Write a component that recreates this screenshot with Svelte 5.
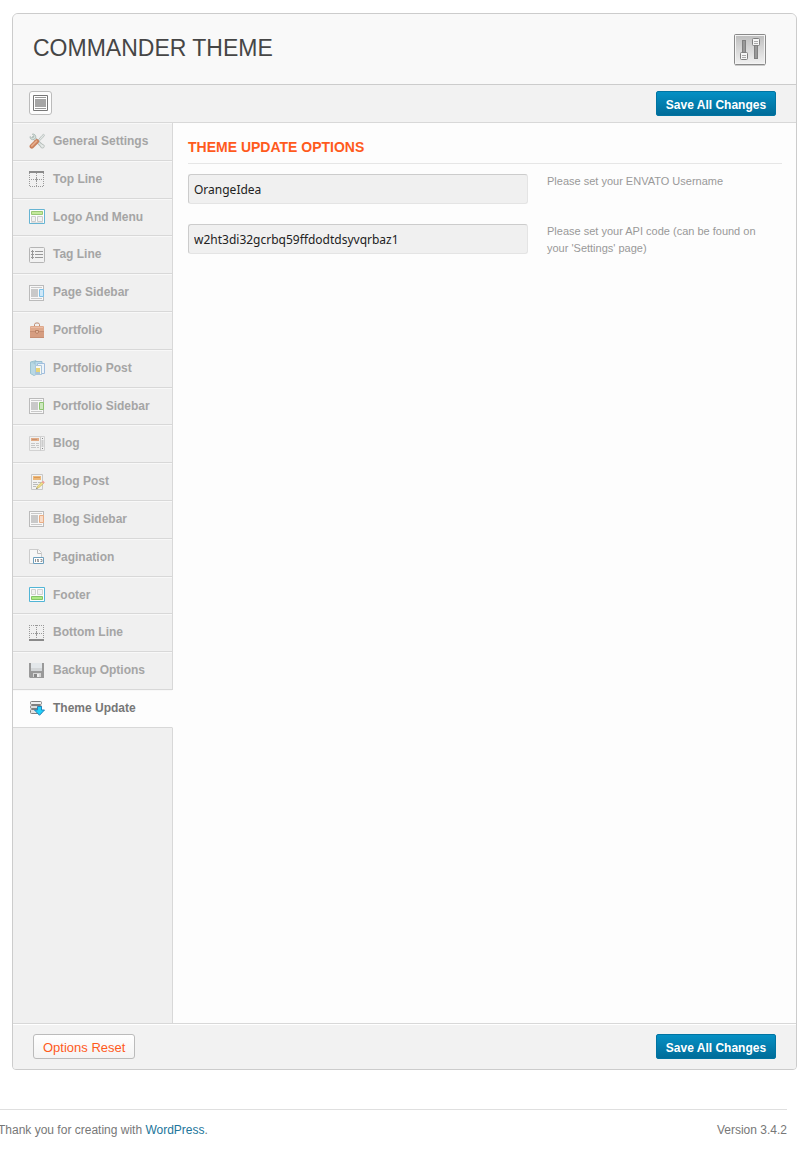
<script>
  const menu = [
    { label: 'General Settings', icon: 'tools' },
    { label: 'Top Line', icon: 'topline' },
    { label: 'Logo And Menu', icon: 'logo' },
    { label: 'Tag Line', icon: 'tag' },
    { label: 'Page Sidebar', icon: 'sidebar', edge: '#7fc0e6', fill: '#cfe8f8' },
    { label: 'Portfolio', icon: 'case' },
    { label: 'Portfolio Post', icon: 'folder' },
    { label: 'Portfolio Sidebar', icon: 'sidebar', edge: '#8cc470', fill: '#cde8bd' },
    { label: 'Blog', icon: 'blog' },
    { label: 'Blog Post', icon: 'post' },
    { label: 'Blog Sidebar', icon: 'sidebar', edge: '#e9ad84', fill: '#f9dcc8' },
    { label: 'Pagination', icon: 'pages' },
    { label: 'Footer', icon: 'footer' },
    { label: 'Bottom Line', icon: 'bottomline' },
    { label: 'Backup Options', icon: 'disk' },
    { label: 'Theme Update', icon: 'update' }
  ];
  let active = $state('Theme Update');
  let username = $state('OrangeIdea');
  let apiCode = $state('w2ht3di32gcrbq59ffdodtdsyvqrbaz1');
</script>

{#snippet dots()}
  <path d="M.5 0v16M7.5 0v16M14.5 0v16" stroke="#999" stroke-dasharray="1 1" />
  <path d="M0 8.5h15" stroke="#999" stroke-dasharray="1 1" />
  <path d="M6 8.5h3M7.5 7v3" stroke="#999" />
{/snippet}

{#snippet glyph(item)}
  <svg class="glyph" viewBox="0 0 16 16" width="16" height="16" fill="none" aria-hidden="true">
    {#if item.icon === 'tools'}
      <path d="M4.5 4.5l8.5 8.5" stroke="#b3bab7" stroke-width="3.4" stroke-linecap="round" />
      <path d="M4.5 4.5l8.5 8.5" stroke="#dfe6e3" stroke-width="1.6" stroke-linecap="round" />
      <path d="M1 3.5C.6 6 3 7.3 5 6.3L6.6 4.7C7.3 2.5 5.5.6 3.3 1L5 2.8 4.5 4.4 2.8 5z" fill="#dce7e3" stroke="#aab8b3" stroke-width=".8" />
      <path d="M11 12.5l1.5 2.5h1.8l.9-1.2v-1.5l-2.4-1.3" fill="#e5e9e7" stroke="#b4bbb8" stroke-width=".8" />
      <path d="M8 8.5l5-6 1.6-1.3 1 1L14.3 4 9 9.3" fill="#e3e8e6" stroke="#b2bab7" stroke-width=".8" />
      <path d="M2.8 13.4l5-5" stroke="#c9805c" stroke-width="4.4" stroke-linecap="round" />
      <path d="M2.8 12.9l4.7-4.7" stroke="#e6ad8c" stroke-width="1.8" stroke-linecap="round" />
    {:else if item.icon === 'topline'}
      {@render dots()}
      <path d="M1 15.5h14" stroke="#999" stroke-dasharray="1 1" />
      <path d="M0 0h15v2H0z" fill="#8a8a8a" />
    {:else if item.icon === 'bottomline'}
      {@render dots()}
      <path d="M0 .5h15" stroke="#999" stroke-dasharray="1 1" />
      <path d="M0 14h15v2H0z" fill="#8a8a8a" />
    {:else if item.icon === 'logo'}
      <path d="M.5.5h15v14H.5z" fill="#fbfdfd" stroke="#66b4d3" />
      <path d="M2.5 2.5h11v3h-11z" fill="#c5e99c" stroke="#98c875" />
      <path d="M2.5 7.5h4v5h-4zM8.5 7.5h5v5h-5z" fill="#f2f2f2" stroke="#ccc" />
      <path d="M2 13.5h12" stroke="#e0e0e0" />
    {:else if item.icon === 'footer'}
      <path d="M.5.5h15v14H.5z" fill="#fbfdfd" stroke="#51b5d6" />
      <path d="M2.5 2.5h4v5h-4zM8.5 2.5h5v5h-5z" fill="#f2f2f2" stroke="#d1d1d1" />
      <path d="M2.5 9.5h11v3h-11z" fill="#aeea87" stroke="#83c568" />
    {:else if item.icon === 'tag'}
      <rect x=".5" y=".5" width="15" height="15" rx="1" fill="#f2f2f2" stroke="#b5b5b5" />
      <path d="M6 4.5h8M6 7.5h8M6 10.5h8" stroke="#999" />
      <path d="M2 4.5h3M2 7.5h3M2 10.5h3M3.5 3v9" stroke="#999" />
    {:else if item.icon === 'sidebar'}
      <rect x=".5" y=".5" width="14" height="15" fill="#f8f8f8" stroke="#bbb" />
      <path d="M2 2.5h11M2 13.5h11" stroke="#c9c9c9" />
      <path d="M2 4h7v8H2z" fill="#c9c9c9" />
      <path d="M10.5 4.5h4v7h-4z" fill={item.fill} stroke={item.edge} />
    {:else if item.icon === 'case'}
      <path d="M5.5 4.5v-2l1-1.5h3l1 1.5v2" stroke="#bc8a70" />
      <rect x="1" y="4" width="14" height="11.5" rx="1" fill="#dfa98c" />
      <path d="M1 9h14v6H1z" fill="#d69d80" />
      <path d="M1 9.5h5M10 9.5h5M1 15.5h14" stroke="#c68e73" />
      <path d="M2 5.5h12" stroke="#e9bba3" />
      <path d="M6.5 8.5h3v2l-1.5 1-1.5-1z" fill="#e7b99f" stroke="#b67e61" />
    {:else if item.icon === 'folder'}
      <path d="M1.5 2L7 .7V14.5L5 15.5l-3.5-2z" fill="#aacfdc" stroke="#9bc2d0" />
      <path d="M6 1.5h7v12.5H6z" fill="#b8dcea" stroke="#9abed1" />
      <path d="M2 2.5l4 2v11l-4-2.2z" fill="#b8d8e4" />
      <path d="M8.5 3.5h7v10h-7z" fill="#eef4fa" stroke="#a0bddd" />
      <path d="M6.5 5.5h6v9h-6z" fill="#f8f8f0" stroke="#aac5dc" />
      <path d="M7 8h4v4H7z" fill="#e7d477" />
      <path d="M7 12h4v2H7z" fill="#a6c5d8" />
    {:else if item.icon === 'blog'}
      <path d="M.5.5h15v14H.5z" fill="#f1f1f1" stroke="#d2d2d2" />
      <path d="M11.5 1v14" stroke="#ccc" />
      <path d="M2 2h8v3H2z" fill="#e2ac86" />
      <path d="M3 3.5h5" stroke="#c79373" />
      <path d="M2 7.5h4M2 9.5h4M2 11.5h5M7 7.5h3M7 9.5h3M8 11.5h2" stroke="#c6c6c6" />
      <path d="M12.5 4h2v7h-2z" fill="#ccc" />
      <path d="M13 2.5h1M13 12.5h1" stroke="#888" />
    {:else if item.icon === 'post'}
      <path d="M2.5.5h11v15h-11z" fill="#f2f2f2" stroke="#c7c7c7" />
      <path d="M4 2h8v4H4z" fill="#ecb879" />
      <path d="M5 3.5h6" stroke="#db9957" />
      <path d="M4 8.5h4M9 8.5h3M4 10.5h5M4 12.5h3" stroke="#bbb" />
      <path d="M7.5 14.5l1-2.5 4.5-4 1.5 1.5-4.5 4z" fill="#f0df8a" stroke="#c9b765" stroke-width=".7" />
      <path d="M12.6 8l1.6-1.2 1.6 1.6-1.4 1.3z" fill="#ee9d9b" />
      <path d="M7.2 15l.6-1.4.9.8z" fill="#666" />
    {:else if item.icon === 'pages'}
      <path d="M.5.5h9l3 3v11H.5z" fill="#f7f7f7" stroke="#ccc" />
      <path d="M8.5 1v3.5H12" stroke="#bbb" />
      <path d="M4.5 8.5h10v6h-10z" fill="#fff" stroke="#6e9fbd" />
      <path d="M6.5 10v3M8 10.5h1.5v1H8.5v1H10M11.5 10.5h1.5v2h-1.5" stroke="#888" stroke-width=".9" />
    {:else if item.icon === 'disk'}
      <path d="M0 0h15v15H1l-1-1z" fill="#999" />
      <path d="M2 0h11v8H2z" fill="#e3e7ea" />
      <path d="M2 5h11v3H2z" fill="#d3d6d8" />
      <path d="M4 10h8v4H4z" fill="#d6d6d6" />
      <path d="M5 11h3v3H5z" fill="#888" />
      <path d="M8 11h2v3H8z" fill="#eee" />
    {:else}
      <rect x="1.5" y="1.5" width="11" height="3" rx="1" fill="#eee" stroke="#808080" />
      <rect x="1.5" y="5.5" width="11" height="3" rx="1" fill="#ddd" stroke="#808080" />
      <rect x="1.5" y="9.5" width="11" height="4" rx="1" fill="#e2e2e2" stroke="#808080" />
      <path d="M8.5 6.5h4v3.5h3L10.5 15.3 5.5 10h3z" fill="#1fd2fa" stroke="#2484bb" />
    {/if}
  </svg>
{/snippet}

<div class="panel">
  <header class="title-bar">
    <h1>COMMANDER THEME</h1>
    <svg width="32" height="32" viewBox="0 0 32 32" fill="none" aria-hidden="true">
      <defs>
        <linearGradient id="plate" x1="0" y1="0" x2="0" y2="1">
          <stop offset="0" stop-color="#bdbdbd" />
          <stop offset="1" stop-color="#f2f2f2" />
        </linearGradient>
      </defs>
      <path d="M1 31.5h30" stroke="#ccc" />
      <rect x=".5" y=".5" width="31" height="30" rx="1" fill="url(#plate)" stroke="#8a8a8a" />
      <rect x="1.5" y="1.5" width="29" height="28" stroke="#f4f4f4" />
      <rect x="8.5" y="6.5" width="3" height="14" fill="#999" stroke="#808080" />
      <rect x="20.5" y="10.5" width="3" height="14" fill="#999" stroke="#808080" />
      <rect x="6.5" y="18.5" width="7" height="7" rx="1" fill="#f5f5f5" stroke="#808080" />
      <rect x="18.5" y="4.5" width="7" height="7" rx="1" fill="#f5f5f5" stroke="#808080" />
      <path d="M8 21.5h4M8 23.5h4M20 7.5h4M20 9.5h4" stroke="#aaa" />
    </svg>
  </header>

  <div class="toolbar">
    <button class="expand" type="button" aria-label="Expand options">
      <svg width="15" height="16" viewBox="0 0 15 16" fill="none" aria-hidden="true">
        <path d="M.5.5h14v15H.5z" fill="#fff" stroke="#777" />
        <path d="M2 2.5h11M2 13.5h11" stroke="#999" />
        <path d="M2 4h11v8H2z" fill="#a5a5a5" />
      </svg>
    </button>
    <button class="save" type="button">Save All Changes</button>
  </div>

  <div class="columns">
    <nav>
      <ul>
        {#each menu as item}
          <li>
            <a
              href="#options"
              class:active={active === item.label}
              aria-current={active === item.label ? 'page' : undefined}
              onclick={() => (active = item.label)}
            >
              {@render glyph(item)}
              {item.label}
            </a>
          </li>
        {/each}
      </ul>
    </nav>

    <main id="options">
      <h2>THEME UPDATE OPTIONS</h2>
      <div class="field">
        <input id="username" type="text" bind:value={username} />
        <label for="username">Please set your ENVATO Username</label>
      </div>
      <div class="field">
        <input id="api" type="text" bind:value={apiCode} />
        <label for="api">Please set your API code (can be found on your 'Settings' page)</label>
      </div>
    </main>
  </div>

  <div class="actions">
    <button class="reset" type="button">Options Reset</button>
    <button class="save" type="button">Save All Changes</button>
  </div>
</div>

<footer class="credits">
  <p>Thank you for creating with <a href="#wordpress">WordPress</a>.</p>
  <p>Version 3.4.2</p>
</footer>

<style>
  :global(body) {
    background: #fff;
    font-family: 'Liberation Sans', Arial, sans-serif;
    font-size: 12px;
    overflow-x: hidden;
  }

  .panel,
  .panel :global(*) {
    box-sizing: border-box;
  }

  .panel {
    margin: 13px 10px 0 12px;
    border: 1px solid #ccc;
    border-radius: 6px 6px 4px 4px;
    background: #f1f1f1;
    overflow: hidden;
  }

  .title-bar {
    display: flex;
    align-items: center;
    justify-content: space-between;
    height: 71px;
    padding: 0 30px 0 20px;
    border-bottom: 1px solid #ccc;
    background: #f9f9f9;
  }

  h1 {
    margin: 0;
    padding-bottom: 2px;
    font-size: 23px;
    font-weight: 400;
    line-height: 28px;
    color: #464646;
  }

  .title-bar svg {
    margin-top: 2px;
  }

  .toolbar,
  .actions {
    display: flex;
    align-items: center;
    justify-content: space-between;
    padding: 0 20px;
    background: #f2f2f2;
  }

  .toolbar {
    height: 38px;
    padding-left: 16px;
    border-bottom: 1px solid #d8d8d8;
  }

  .actions {
    height: 46px;
    border-top: 1px solid #d8d8d8;
    box-shadow: inset 0 1px #fff;
  }

  button {
    height: 25px;
    border-radius: 3px;
    font-family: inherit;
    cursor: pointer;
  }

  .expand {
    display: grid;
    place-items: center;
    width: 23px;
    height: 24px;
    margin-bottom: 2px;
    padding: 0;
    border: 1px solid #bbb;
    background: #fdfdfd;
  }

  .save {
    padding: 2px 0 0;
    width: 120px;
    border: 1px solid #0074a2;
    border-radius: 2px;
    background: linear-gradient(#0590c4, #006c99);
    font-size: 12px;
    font-weight: 700;
    color: #fff;
  }

  .reset {
    padding: 2px 9px 0;
    border: 1px solid #bbb;
    background: linear-gradient(#fff, #f3f3f3);
    font-size: 13px;
    color: #ff5a1c;
  }

  .columns {
    display: flex;
    min-height: 900px;
  }

  nav {
    display: flex;
    flex-direction: column;
    flex: 0 0 160px;
    background: #f0f0f0;
  }

  nav::after {
    content: '';
    flex: 1;
    border-right: 1px solid #d8d8d8;
  }

  ul {
    margin: 0;
    padding: 0;
    list-style: none;
  }

  nav a {
    display: flex;
    align-items: center;
    gap: 8px;
    padding: 7px 0 7px 16px;
    border-right: 1px solid #d8d8d8;
    border-bottom: 1px solid #d8d8d8;
    box-shadow: inset 0 1px #f8f8f8;
    font-weight: 700;
    line-height: 1.9;
    color: #a5a5a5;
    text-decoration: none;
  }

  nav a.active {
    border-right-color: #fdfdfd;
    background: #fdfdfd;
    color: #777;
  }

  .glyph {
    flex: none;
  }

  main {
    flex: 1;
    min-width: 0;
    padding: 15px 14px 0 15px;
    background: #fdfdfd;
  }

  h2 {
    margin: 0 0 10px;
    padding-bottom: 7px;
    border-bottom: 1px solid #e6e6e6;
    font-size: 14px;
    line-height: 18px;
    color: #ff5a1c;
  }

  .field {
    display: grid;
    grid-template-columns: 340px 1fr;
    align-items: start;
    gap: 19px;
    min-height: 34px;
    margin-bottom: 16px;
  }

  input {
    width: 100%;
    height: 30px;
    padding: 0 5px;
    border: 1px solid #e4e4e4;
    border-top-color: #ccc;
    border-left-color: #ccc;
    border-radius: 3px;
    background: #f0f0f0;
    font: 12px 'Noto Sans', 'Open Sans', sans-serif;
    color: #222;
  }

  label {
    margin-top: -1px;
    padding-right: 12px;
    font-size: 11px;
    line-height: 17px;
    color: #999;
  }

  .credits {
    display: flex;
    justify-content: space-between;
    margin: 39px 20px 0 0;
    border-top: 1px solid #dfdfdf;
    color: #777;
  }

  .credits p {
    margin: 10px 0 11px -2px;
    line-height: 20px;
  }

  .credits a {
    color: #21759b;
    text-decoration: none;
  }
</style>
